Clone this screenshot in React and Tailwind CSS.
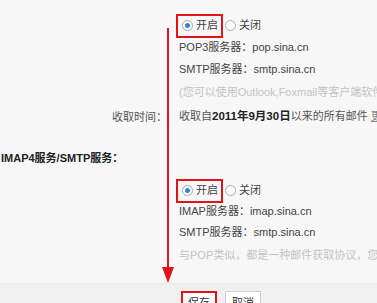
import React from "react";

const font = { fontFamily: '"Liberation Sans", "Noto Sans CJK SC", sans-serif' };

const Radio = ({ checked }) => (
  <span className="inline-flex h-[11px] w-[11px] items-center justify-center rounded-full border border-[#a9a9a9] bg-white">
    {checked && <span className="h-[5px] w-[5px] rounded-full bg-[#2f86d9]" />}
  </span>
);

const RadioGroup = () => (
  <div className="flex h-[24px] items-center">
    <div className="flex h-full items-center gap-[3px] border-2 border-[#e3131b] pl-[4px] pr-[3px] text-[11px]">
      <Radio checked />
      <span>开启</span>
    </div>
    <div className="ml-[2px] flex items-center gap-[3px] text-[11px]">
      <Radio />
      <span>关闭</span>
    </div>
  </div>
);

const Row = ({ label, children, className = "" }) => (
  <div className={`flex items-center ${className}`}>
    <div className="w-[168px] shrink-0 pr-[1px] text-right text-[#555]">{label}</div>
    <div className="pl-[11px]">{children}</div>
  </div>
);

export default function App() {
  return (
    <div
      className="relative h-[303px] w-[377px] overflow-hidden whitespace-nowrap bg-[#f7f7f7] text-[11px] text-[#444]"
      style={font}
    >
      <div className="pt-[14px]">
        <Row className="h-[23px]">
          <div className="-ml-[3px]">
            <RadioGroup />
          </div>
        </Row>
        <Row className="h-[21px]">POP3服务器：pop.sina.cn</Row>
        <Row className="h-[23px]">SMTP服务器：smtp.sina.cn</Row>
        <Row className="h-[23px]">
          <span className="text-[#c4c4c4]">(您可以使用Outlook,Foxmail等客户端软件来收发邮件)</span>
        </Row>
        <Row className="h-[26px]" label="收取时间：">
          <span className="text-[#555]">
            收取自<b className="text-[11.5px] text-[#222]">2011年9月30日</b>以来的所有邮件{" "}
            <span className="text-[#888] underline">更改</span>
          </span>
        </Row>

        <div className="mt-[17px] flex h-[22px] items-center pl-[1px] text-[11px] font-bold text-[#222]">
          IMAP4服务/SMTP服务：
        </div>

        <Row className="mt-[10px] h-[23px]">
          <div className="-ml-[3px]">
            <RadioGroup />
          </div>
        </Row>
        <Row className="h-[18px]">IMAP服务器：imap.sina.cn</Row>
        <Row className="h-[24px]">SMTP服务器：smtp.sina.cn</Row>
        <Row className="h-[23px]">
          <span className="text-[#c4c4c4]">与POP类似，都是一种邮件获取协议，您可以以此来收取邮件</span>
        </Row>
      </div>

      {/* footer */}
      <div className="mt-[16px] flex h-[30px] gap-[8px] border-t border-[#ececec] bg-[#f0f0f0] pl-[181px] pt-[7px]">
        <button className="h-[24px] border-2 border-[#e3131b] bg-white px-[5px] text-[11px] text-[#333]">
          保存
        </button>
        <button className="h-[24px] border border-[#cfcfcf] bg-white px-[6px] text-[11px] text-[#333]">
          取消
        </button>
      </div>

      {/* annotation arrow */}
      <div className="absolute left-[167px] top-[28px] h-[242px] w-[2px] bg-[#e3131b]" />
      <svg className="absolute left-[162px] top-[267px]" width="12" height="16" viewBox="0 0 12 16">
        <polygon points="0,0 12,0 6,16" fill="#e3131b" />
      </svg>
    </div>
  );
}
